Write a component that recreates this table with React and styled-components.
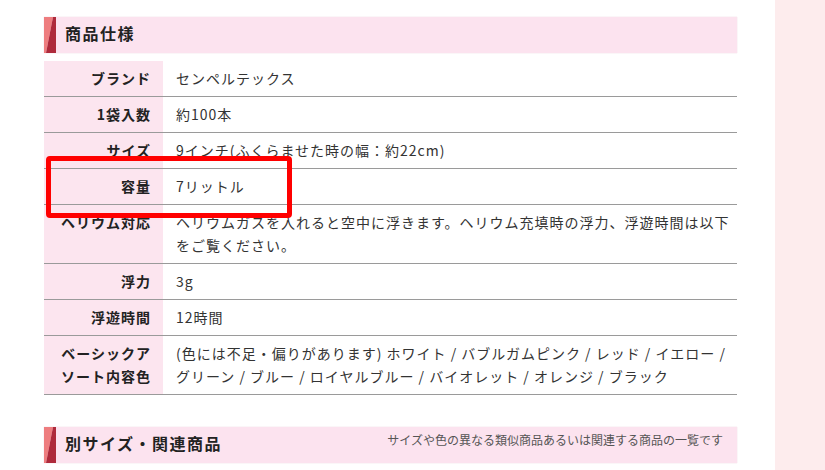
import React from 'react'
import styled, { createGlobalStyle } from 'styled-components'

const GlobalStyle = createGlobalStyle`
  html, body {
    margin: 0;
    padding: 0;
    background: #fff;
  }
  body {
    font-family: "Noto Sans CJK JP", "Noto Sans", sans-serif;
    color: #333;
  }
`

const Page = styled.div`
  display: flex;
  width: 825px;
  height: 470px;
  overflow: hidden;
`

const Main = styled.div`
  width: 693px;
  padding: 17px 0 0 44px;
`

const Sidebar = styled.div`
  margin-left: 38px;
  flex: 1;
  background: #fdeced;
`

const SectionHead = styled.div`
  display: flex;
  align-items: flex-start;
  height: 36px;
  background: #fce3ef;
  box-shadow: 0 0 1px rgba(220, 170, 190, 0.6);
  margin-top: ${p => p.$gap || 0}px;
`

const Title = styled.h2`
  margin: 4px 0 0 9px;
  font-size: 16px;
  font-weight: bold;
  letter-spacing: 1.5px;
  color: #222;
  line-height: 24px;
  flex: 1;
`

const Note = styled.span`
  font-size: 12px;
  color: #555;
  line-height: 16px;
  margin: 5px 14px 0 0;
`

const Spec = styled.div`
  position: relative;
  margin-top: 8px;
`

const Row = styled.div`
  display: grid;
  grid-template-columns: 119px 1fr;
  border-bottom: 1px solid #9a9a9a;
  font-size: 14px;
  line-height: 23px;
  letter-spacing: 1px;
`

const Label = styled.div`
  background: #fce5ef;
  text-align: right;
  font-weight: bold;
  color: #222;
  padding: 6px 12px 6px 0;
  white-space: pre-line;
`

const Value = styled.div`
  padding: 6px 4px 6px 13px;
  color: #333;
`

const Highlight = styled.div`
  position: absolute;
  left: 2px;
  top: 95px;
  width: 236px;
  height: 52px;
  border: 5px solid #ff0000;
  border-radius: 4px;
`

function Accent() {
  return (
    <svg width="12" height="36" viewBox="0 0 12 36">
      <polygon points="0,0 9,0 2,36 0,36" fill="#ee7d7f" />
      <polygon points="9,0 12,0 12,36 2,36" fill="#ae2a3b" />
    </svg>
  )
}

const specs = [
  ['ブランド', 'センペルテックス'],
  ['1袋入数', '約100本'],
  ['サイズ', '9インチ(ふくらませた時の幅：約22cm)'],
  ['容量', '7リットル'],
  ['ヘリウム対応', 'ヘリウムガスを入れると空中に浮きます。ヘリウム充填時の浮力、浮遊時間は以下をご覧ください。'],
  ['浮力', '3g'],
  ['浮遊時間', '12時間'],
  ['ベーシックア\nソート内容色', '(色には不足・偏りがあります) ホワイト / バブルガムピンク / レッド / イエロー / グリーン / ブルー / ロイヤルブルー / バイオレット / オレンジ / ブラック'],
]

export default function App() {
  return (
    <Page>
      <GlobalStyle />
      <Main>
        <SectionHead>
          <Accent />
          <Title>商品仕様</Title>
        </SectionHead>
        <Spec>
          {specs.map(([k, v]) => (
            <Row key={k}>
              <Label>{k}</Label>
              <Value>{v}</Value>
            </Row>
          ))}
          <Highlight />
        </Spec>
        <SectionHead $gap={32}>
          <Accent />
          <Title>別サイズ・関連商品</Title>
          <Note>サイズや色の異なる類似商品あるいは関連する商品の一覧です</Note>
        </SectionHead>
      </Main>
      <Sidebar />
    </Page>
  )
}
